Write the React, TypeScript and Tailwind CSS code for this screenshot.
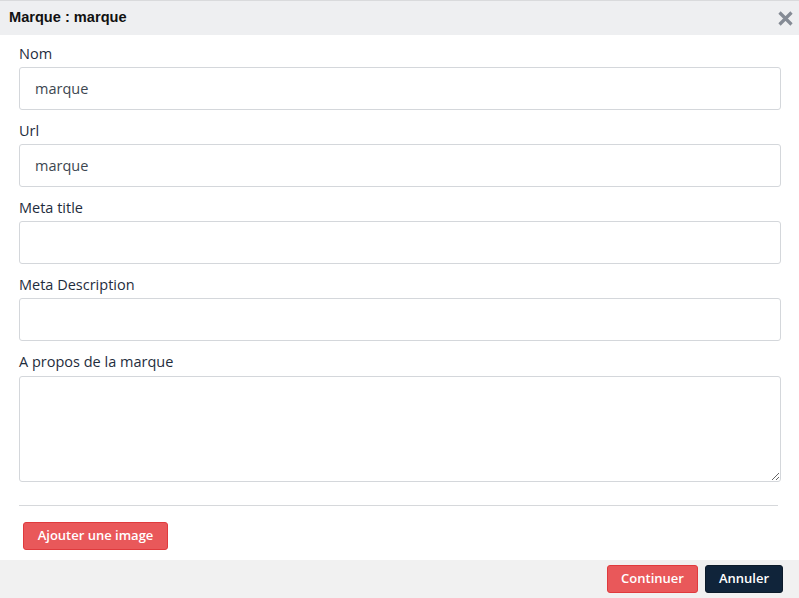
import React from "react";

const labelFont = { fontFamily: '"Open Sans", "Liberation Sans", sans-serif' };

function Field({ label, value }: { label: string; value?: string }) {
  return (
    <div className="mb-[10px]">
      <label className="block h-[21px] leading-[21px] text-[14.5px] font-medium text-[#1f2d3d] mb-[3px]">
        {label}
      </label>
      <input
        defaultValue={value}
        className="block w-full h-[43px] rounded-[3px] border border-[#d4d7db] bg-white px-[15px] text-[14.5px] text-[#3d4650] outline-none"
      />
    </div>
  );
}

export default function App() {
  return (
    <div
      className="w-[799px] h-[598px] bg-white flex flex-col border-t border-[#d9dadc] overflow-hidden"
      style={labelFont}
    >
      <div className="h-[34px] shrink-0 bg-[#eeeff1] flex items-center justify-between pl-[9px] pr-[6px]">
        <span
          className="text-[14.6px] font-bold text-[#111]"
          style={{ fontFamily: '"Liberation Sans", Arial, sans-serif' }}
        >
          Marque : marque
        </span>
        <svg width="15" height="15" viewBox="0 0 15 15" className="mt-[1px]">
          <path d="M1.5 1.5 L13.5 13.5 M13.5 1.5 L1.5 13.5" stroke="#858b95" strokeWidth="3.2" strokeLinecap="butt" />
        </svg>
      </div>

      <div className="flex-1 pt-[8px] pl-[19px] pr-[18px]">
        <Field label="Nom" value="marque" />
        <Field label="Url" value="marque" />
        <Field label="Meta title" />
        <Field label="Meta Description" />
        <div>
          <label className="block h-[21px] leading-[21px] text-[14.5px] font-medium text-[#1f2d3d] mb-[4px]">
            A propos de la marque
          </label>
          <textarea className="block w-full h-[106px] rounded-[3px] border border-[#d4d7db] bg-white px-[15px] py-[8px] text-[14px] outline-none" />
        </div>
        <hr className="mt-[23px] mr-[3px] border-t border-[#d6d8db]" />
        <button className="mt-[16px] ml-[4px] h-[28px] w-[145px] rounded-[3px] border border-[#e03a3d] bg-[#e9585a] text-white text-[13px] font-semibold">
          Ajouter une image
        </button>
      </div>

      <div className="h-[38px] shrink-0 bg-[#f1f1f1] flex items-center justify-end gap-[7px] pr-[16px]">
        <button className="h-[28px] w-[91px] rounded-[3px] border border-[#e03a3d] bg-[#e9585a] text-white text-[13px] font-semibold">
          Continuer
        </button>
        <button className="h-[28px] w-[78px] rounded-[3px] border border-[#0c1b2a] bg-[#10243a] text-white text-[13px] font-semibold">
          Annuler
        </button>
      </div>
    </div>
  );
}
